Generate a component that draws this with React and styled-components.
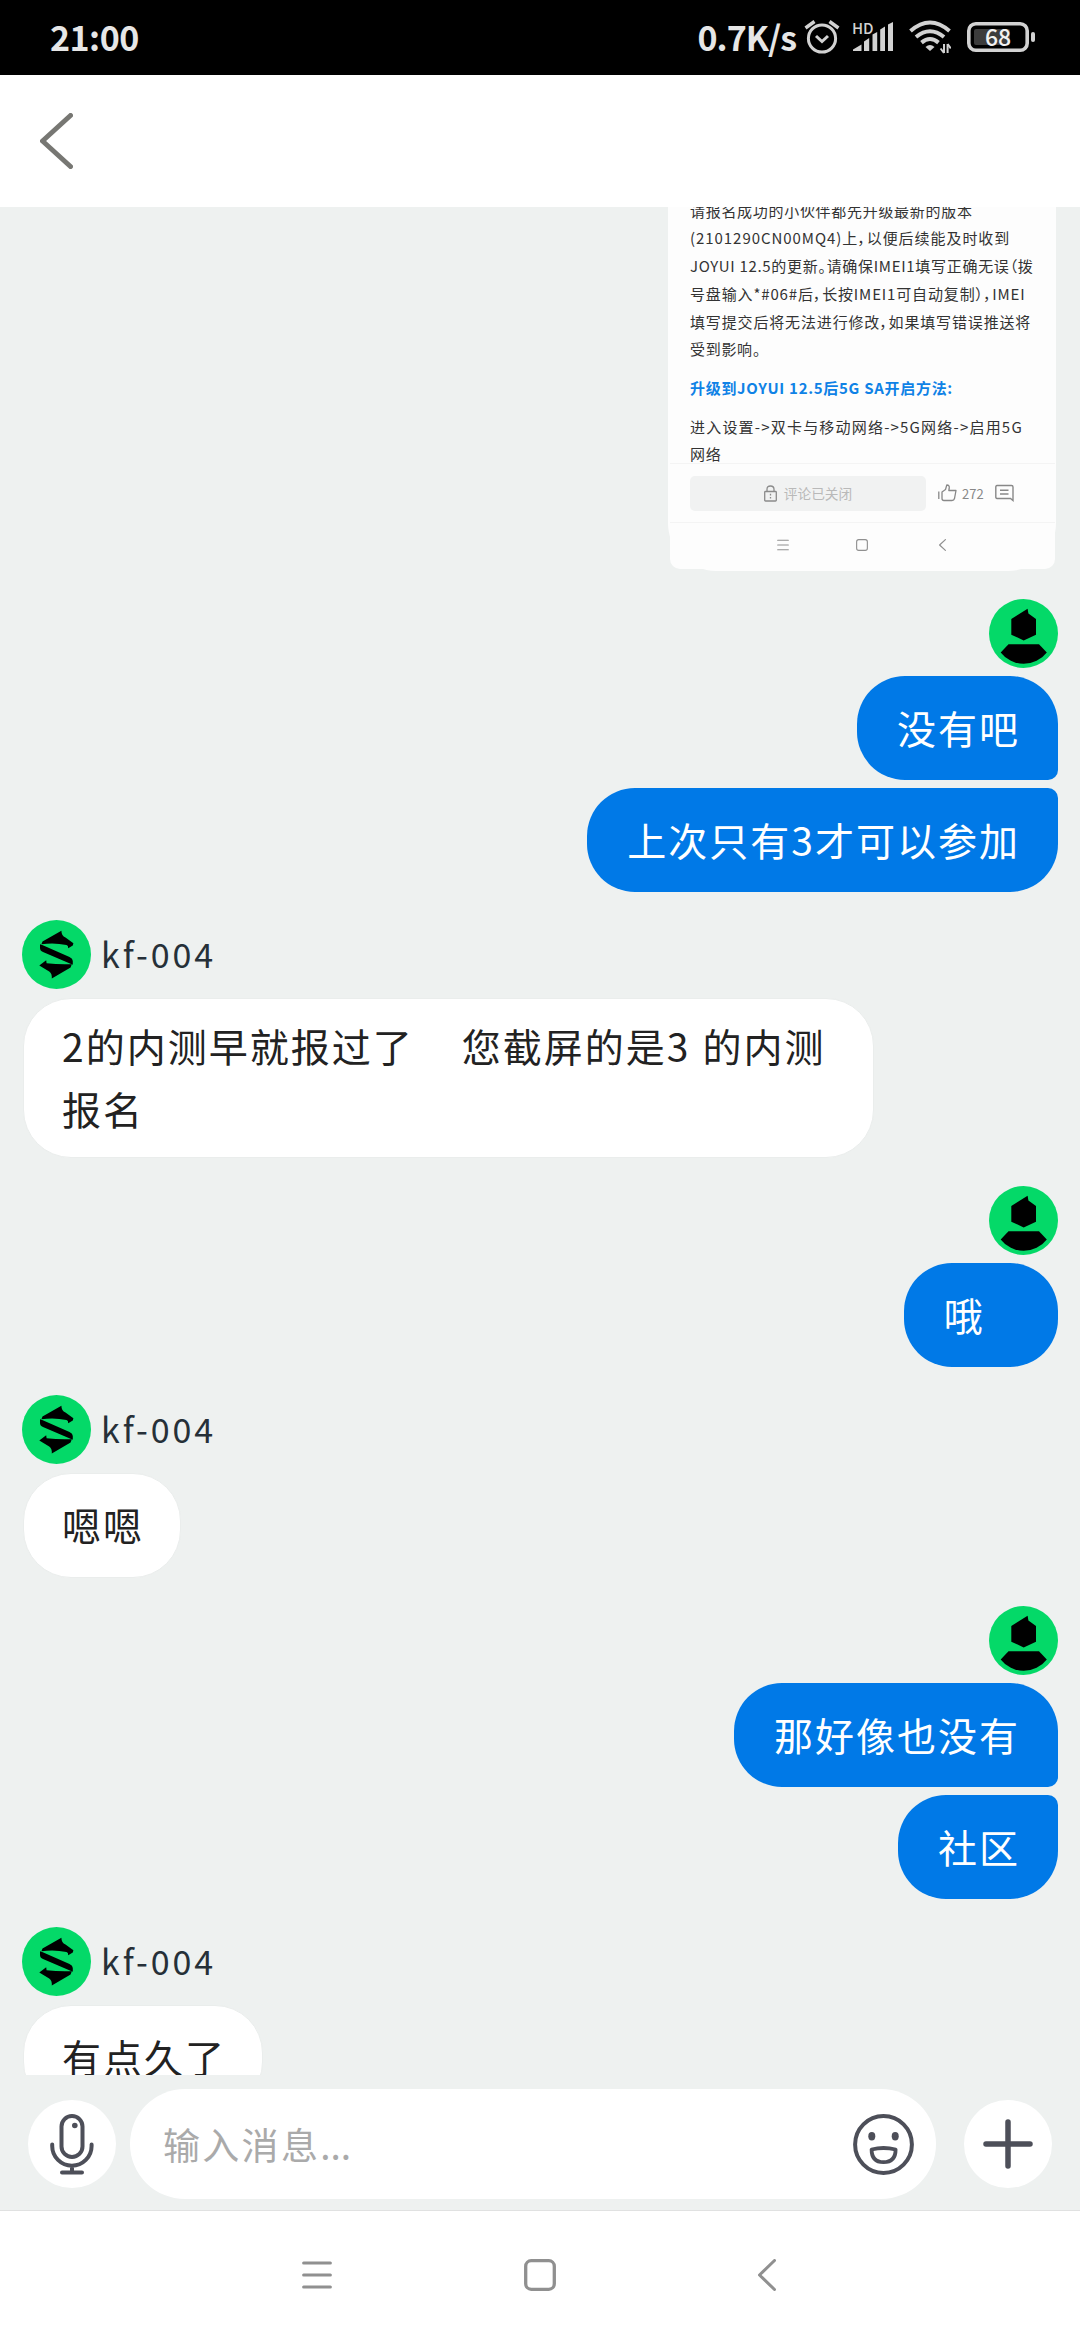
import React from 'react'
import styled, { createGlobalStyle } from 'styled-components'

const GlobalStyle = createGlobalStyle`
  * {
    box-sizing: border-box;
  }
  body {
    margin: 0;
    background: #fff;
    font-family: "Noto Sans CJK SC", "Noto Sans", sans-serif;
  }
  svg {
    display: block;
    flex-shrink: 0;
  }
`;

const Screen = styled.div`
    width: 1080px;
    height: 2340px;
    display: flex;
    flex-direction: column;
    overflow: hidden;
    background: #fff;
`;

/* status bar */
const StatusBar = styled.div`
    height: 75px;
    flex-shrink: 0;
    padding: 0 45px 1px 50px;
    display: flex;
    align-items: center;
    background: #000;
    color: #e6e6e6;
`;
const Clock = styled.span`
    flex: 1;
    padding-bottom: 1px;
    font-size: 34px;
    line-height: 40px;
    font-weight: 700;
    letter-spacing: -0.5px;
`;
const Speed = styled.span`
    padding-bottom: 1px;
    font-size: 34px;
    line-height: 40px;
    font-weight: 700;
    letter-spacing: -1px;
    margin-right: 8px;
`;
const StatusIcons = styled.div`
    display: flex;
    align-items: center;
`;
const Signal = styled.div`
    position: relative;
    margin: 0 16px 0 13px;
`;
const Hd = styled.span`
    position: absolute;
    left: -1px;
    top: -2px;
    font-size: 15px;
    line-height: 15px;
    font-weight: 500;
    color: #d2d2d2;
`;
const Battery = styled.div`
    position: relative;
    margin-left: 16px;
`;
const Percent = styled.span`
    position: absolute;
    left: 0;
    top: -1px;
    width: 62px;
    text-align: center;
    font-size: 23px;
    line-height: 30px;
    font-weight: 500;
    color: #f2f2f2;
`;

/* page header */
const Header = styled.div`
    height: 132px;
    flex-shrink: 0;
    padding: 0 0 1px 40px;
    display: flex;
    align-items: center;
    background: #fff;
`;

/* conversation */
const Chat = styled.div`
    height: 1868px;
    flex-shrink: 0;
    padding: 0 22px;
    display: flex;
    flex-direction: column;
    overflow: hidden;
    background: #eef1f0;
`;
const Group = styled.div`
    flex-shrink: 0;
    display: flex;
    flex-direction: column;
    align-items: ${props => props.mine ? "flex-end" : "flex-start"};
    gap: ${props => props.mine ? 8 : 9}px;
    margin-bottom: 28px;
`;
const Sender = styled.div`
    height: 69px;
    display: flex;
    align-items: center;
`;
const Name = styled.span`
    margin-left: 10px;
    padding-bottom: 2px;
    font-size: 34px;
    line-height: 40px;
    letter-spacing: 2.9px;
    color: #263038;
`;
const Bubble = styled.div`
    min-height: 104px;
    display: flex;
    align-items: center;
    border-radius: 48px;
    font-size: 39px;
    letter-spacing: 2px;
    word-spacing: 1px;
    white-space: pre-wrap;
`;
const MyBubble = styled(Bubble)`
    padding: 0 38px 1px 40px;
    background: #0079e7;
    color: #fff;
    line-height: 63px;
    border-top-right-radius: ${props => props.joined === "top" ? 10 : 48}px;
    border-bottom-right-radius: ${props => props.joined === "bottom" ? 10 : 48}px;
`;
const TheirBubble = styled(Bubble)`
    max-width: 851px;
    min-height: 105px;
    margin-left: 1px;
    padding: 15px 36px 17px 38px;
    background: #fff;
    border: 1px solid #eaedec;
    color: #222;
    line-height: 63px;
    word-spacing: 1.3px;
`;

/* shared screenshot */
const Shot = styled.div`
    flex-shrink: 0;
    align-self: flex-end;
    width: 388px;
    height: 364px;
    margin: 0 2px 28px 0;
    padding: 0 1px 2px 2px;
    background: #fdfdfd;
    border-radius: 0 0 48px 48px;
`;
const ShotPage = styled.div`
    height: 362px;
    display: flex;
    flex-direction: column;
    overflow: hidden;
    background: #fdfdfd;
    border-radius: 0 0 10px 10px;
`;
const Article = styled.div`
    height: 256px;
    padding-left: 20px;
    overflow: hidden;
    font-size: 15px;
    line-height: 27.8px;
    color: #333;
`;
const Paragraph = styled.div`
    margin: ${props => props.first ? "-10.5px" : "11px"} 0 0;
`;
const Line = styled.div`
    white-space: pre;
    font-feature-settings: "palt";
    letter-spacing: ${props => props.$track || 0.7}px;
`;
const Subtitle = styled(Line)`
    margin-top: 10.5px;
    font-weight: 700;
    color: #0f82e6;
`;
const ShotBar = styled.div`
    height: 60px;
    padding: 0 41px 0 20px;
    display: flex;
    align-items: center;
    border-top: 1px solid #f4f4f4;
    border-bottom: 1px solid #f4f4f4;
    font-size: 15px;
    color: #888;
`;
const Closed = styled.div`
    width: 236px;
    height: 35px;
    margin-right: 12px;
    display: flex;
    align-items: center;
    justify-content: center;
    gap: 7px;
    border-radius: 5px;
    background: #f1f2f2;
    font-size: 13.7px;
    color: #b9b9b9;
`;
const Likes = styled.span`
    width: 23px;
    margin: 0 10px 0 5px;
    font-size: 13px;
`;
const ShotNav = styled.div`
    flex: 1;
    padding: 0 0 3px 107px;
    display: grid;
    grid-template-columns: 79px 83px 20px;
    align-items: center;
`;

/* composer */
const Composer = styled.div`
    height: 136px;
    flex-shrink: 0;
    padding: 3px 28px 0 28px;
    display: flex;
    align-items: center;
    background: #eef1f0;
    border-bottom: 1px solid #e0e1e1;
`;
const RoundButton = styled.button`
    width: 88px;
    height: 88px;
    padding: 0;
    border: none;
    border-radius: 50%;
    display: flex;
    align-items: center;
    justify-content: center;
    background: #fff;
`;
const Field = styled.div`
    width: 806px;
    height: 110px;
    margin: 0 28px 0 14px;
    padding: 0 22px 0 33px;
    display: flex;
    align-items: center;
    justify-content: space-between;
    border-radius: 55px;
    background: #fff;
`;
const Placeholder = styled.span`
    font-size: 37px;
    letter-spacing: 2.3px;
    color: #aaa;
`;
const Dots = styled.span`
    letter-spacing: 0;
`;

const NavBar = styled.div`
    flex: 1;
    padding: 0 0 1px 302px;
    display: grid;
    grid-template-columns: 222px 234px 20px;
    align-items: center;
`;

const UserAvatar = () => (
  <svg width="69" height="69" viewBox="0 0 69 69">
    <circle cx="34.5" cy="34.5" r="34.5" fill="#04d968" />
    <path d="M38.6 9.8 L39.4 14.6 L47 20 V35.7 L34.7 41.4 L22.3 35.7 V20 Z" />
    <path d="M19.5 45.3 H50 L57.8 53.4 A29 29 0 0 1 11.7 53.4 Z" />
  </svg>
);

const AgentAvatar = () => (
  <svg width="69" height="69" viewBox="0 0 69 69">
    <circle cx="34.5" cy="34.5" r="34.5" fill="#04d968" />
    <path d="M39.4 10.7 Q39.4 15.6 43.5 17.6 L51.4 23.3 L50.8 25.6 L46.2 28.2 Q46.4 25.6 44.5 25 Q32 22.4 19.4 24.3 L20.5 21.6 Z" />
    <path d="M18 24.2 L20.8 25.2 L47.5 37 Q50.8 38.6 50.8 41 V44.8 L21 32 Q18 30.8 18 28 Z" />
    <path d="M17.3 45.4 L24.2 40.3 L24.6 43.2 Q37 44.8 49.8 44.2 L48.6 47.6 L29.8 58.6 Q30.2 53.6 27.2 51.6 Z" />
  </svg>
);

const AlarmIcon = () => (
  <svg width="36" height="36" viewBox="0 0 36 36" fill="none" stroke="#d2d2d2">
    <circle cx="18" cy="19.5" r="13.6" strokeWidth="3" />
    <path d="M12 17 L18 22.5 L24 17" strokeWidth="3" />
    <path d="M1.5 9 L10.5 2.5 M34.5 9 L25.5 2.5" strokeWidth="3.4" />
  </svg>
);

const SignalIcon = () => (
  <svg width="40" height="30" viewBox="0 0 40 30" fill="#d2d2d2">
    <path d="M0 29 V27.5 L8.5 22.5 V29 Z" />
    <path d="M11 29 V19.5 L16.2 16 V29 Z" />
    <path d="M19.5 29 V12.5 L24.2 10 V29 Z" />
    <path d="M27.2 29 V7.5 L32 4.5 V29 Z" />
    <path d="M35 29 V2.5 L40 0 V29 Z" />
  </svg>
);

const WifiIcon = () => (
  <svg width="42" height="34" viewBox="0 0 42 34" fill="none" stroke="#d2d2d2" strokeWidth="4">
    <path d="M1.5 11 Q21 -6 40.5 11" />
    <path d="M7 17 Q21 5.5 35 17" />
    <path d="M12.5 22.6 Q21 15.5 29.5 22.6" />
    <path d="M16.5 27 Q21 23 25.5 27 L21 31 Z" fill="#d2d2d2" stroke="none" />
    <path d="M35 24 V33 M38.6 24 V33" strokeWidth="2" />
    <path d="M35 33 L31.6 28.5 M38.6 24 L41.8 28.5" strokeWidth="2" />
  </svg>
);

const BatteryIcon = () => (
  <svg width="68" height="30" viewBox="0 0 68 30">
    <rect x="1.8" y="1.8" width="58.4" height="26.4" rx="7" fill="none" stroke="#d2d2d2" strokeWidth="3.6" />
    <rect x="7" y="7" width="36" height="16" rx="2" fill="#3c3c3c" />
    <rect x="64" y="10" width="4" height="10" rx="2" fill="#d2d2d2" />
  </svg>
);

const BackIcon = ({ width, height, stroke, weight }) => (
  <svg width={width} height={height} viewBox={`0 0 ${width} ${height}`} fill="none">
    <path
      d={`M${width - weight / 2} ${weight / 2} L${weight / 2} ${height / 2} L${width - weight / 2} ${height - weight / 2}`}
      stroke={stroke}
      strokeWidth={weight}
      strokeLinecap="round"
      strokeLinejoin="round"
    />
  </svg>
);

const MenuIcon = ({ size, weight }) => (
  <svg width={size} height={size} viewBox="0 0 30 30" stroke="#909090" strokeWidth={weight} strokeLinecap="round">
    <path d="M1.6 3 H28.4 M1.6 15 H28.4 M1.6 27 H28.4" />
  </svg>
);

const HomeIcon = ({ size, weight }) => (
  <svg width={size} height={size} viewBox="0 0 32 32">
    <rect x="1.7" y="1.7" width="28.6" height="28.6" rx="5.5" fill="none" stroke="#909090" strokeWidth={weight} />
  </svg>
);

const LockIcon = () => (
  <svg width="13" height="17" viewBox="0 0 13 17" fill="none" stroke="#8b8b8b" strokeWidth="1.3">
    <rect x="0.7" y="6.5" width="11.6" height="9.5" rx="0.8" />
    <path d="M3 6.5 V4.2 Q3 1 6.5 1 Q10 1 10 4.2 V6.5 M6.5 8.8 V10.5 M6.5 12 V13.6" />
  </svg>
);

const ThumbIcon = () => (
  <svg width="19" height="18" viewBox="0 0 19 18" fill="none" stroke="#888" strokeWidth="1.3" strokeLinejoin="round">
    <path d="M0.8 7.5 V15 M4 8 L7.5 5.5 L8.8 1 Q11.8 1 11.2 4.5 L10.8 6.5 H18 L16.5 14.5 Q16 16.5 14 16.5 H6 Q4 16.5 4 14.5 Z" />
  </svg>
);

const CommentIcon = () => (
  <svg width="19" height="18" viewBox="0 0 19 18" fill="none" stroke="#888" strokeWidth="1.4">
    <path d="M2 1.5 H16.5 Q18 1.5 18 3 V16.5 L15.5 14.5 H2 Q0.8 14.5 0.8 13 V3 Q0.8 1.5 2 1.5 Z M5 6.3 H13.5 M5 10 H13.5" />
  </svg>
);

const MicIcon = () => (
  <svg width="44" height="61" viewBox="0 0 44 61" fill="none" stroke="#4d4f59" strokeWidth="4" strokeLinecap="round">
    <rect x="11.5" y="2" width="21" height="41" rx="10.5" />
    <path d="M2.2 30.5 V32 A19.7 19.7 0 0 0 41.6 32 V30.5 M22 52 V58 M12 58.5 H32" />
    <circle cx="24.8" cy="11.5" r="2.8" fill="#4d4f59" stroke="none" />
  </svg>
);

const SmileIcon = () => (
  <svg width="61" height="61" viewBox="0 0 61 61" fill="none" stroke="#4d4f59" strokeWidth="4">
    <circle cx="30.5" cy="30.5" r="28.4" />
    <path d="M18.6 35.5 Q30.5 32.5 42.6 35.5 Q42.6 48.2 30.5 48.2 Q18.6 48.2 18.6 35.5 Z" strokeWidth="3.8" strokeLinejoin="round" />
    <ellipse cx="18.8" cy="22.3" rx="3.5" ry="4.2" fill="#4d4f59" stroke="none" />
    <ellipse cx="42.2" cy="22.3" rx="3.5" ry="4.2" fill="#4d4f59" stroke="none" />
  </svg>
);

const PlusIcon = () => (
  <svg width="50" height="50" viewBox="0 0 50 50" stroke="#4d4f59" strokeWidth="5.5" strokeLinecap="round">
    <path d="M3 25 H47 M25 3 V47" />
  </svg>
);

const MySender = () => (
  <Sender>
    <UserAvatar />
  </Sender>
);

const Agent = ({ children }) => (
  <Group>
    <Sender>
      <AgentAvatar />
      <Name>kf-004</Name>
    </Sender>
    <TheirBubble>{children}</TheirBubble>
  </Group>
);

const SharedShot = () => (
  <Shot>
    <ShotPage>
      <Article>
        <Paragraph first>
          <Line>请报名成功的小伙伴都先升级最新的版本</Line>
          <Line $track={0.95}>(2101290CN00MQ4)上，以便后续能及时收到</Line>
          <Line>JOYUI 12.5的更新。请确保IMEI1填写正确无误（拨</Line>
          <Line $track={0.85}>号盘输入*#06#后，长按IMEI1可自动复制），IMEI</Line>
          <Line $track={0.85}>填写提交后将无法进行修改，如果填写错误推送将</Line>
          <Line>受到影响。</Line>
        </Paragraph>
        <Subtitle>升级到JOYUI 12.5后5G SA开启方法:</Subtitle>
        <Paragraph>
          <Line $track={1.2}>进入设置-&gt;双卡与移动网络-&gt;5G网络-&gt;启用5G</Line>
          <Line>网络</Line>
        </Paragraph>
      </Article>
      <ShotBar>
        <Closed>
          <LockIcon />
          评论已关闭
        </Closed>
        <ThumbIcon />
        <Likes>272</Likes>
        <CommentIcon />
      </ShotBar>
      <ShotNav>
        <MenuIcon size={12} weight={2.6} />
        <HomeIcon size={12} weight={3} />
        <BackIcon width={7} height={12} stroke="#909090" weight={1.2} />
      </ShotNav>
    </ShotPage>
  </Shot>
);

const App = () => {
  return (
    <>
      <GlobalStyle />
      <Screen>
        <StatusBar>
          <Clock>21:00</Clock>
          <Speed>0.7K/s</Speed>
          <StatusIcons>
            <AlarmIcon />
            <Signal>
              <SignalIcon />
              <Hd>HD</Hd>
            </Signal>
            <WifiIcon />
            <Battery>
              <BatteryIcon />
              <Percent>68</Percent>
            </Battery>
          </StatusIcons>
        </StatusBar>
        <Header>
          <BackIcon width={33} height={56} stroke="#777773" weight={5} />
        </Header>
        <Chat>
          <SharedShot />
          <Group mine>
            <MySender />
            <MyBubble joined="bottom">没有吧</MyBubble>
            <MyBubble joined="top">上次只有3才可以参加</MyBubble>
          </Group>
          <Agent>{"2的内测早就报过了    您截屏的是3 的内测报名"}</Agent>
          <Group mine>
            <MySender />
            <MyBubble>{"哦   "}</MyBubble>
          </Group>
          <Agent>嗯嗯</Agent>
          <Group mine>
            <MySender />
            <MyBubble joined="bottom">那好像也没有</MyBubble>
            <MyBubble joined="top">社区</MyBubble>
          </Group>
          <Agent>有点久了</Agent>
        </Chat>
        <Composer>
          <RoundButton><MicIcon /></RoundButton>
          <Field>
            <Placeholder>输入消息<Dots>...</Dots></Placeholder>
            <SmileIcon />
          </Field>
          <RoundButton><PlusIcon /></RoundButton>
        </Composer>
        <NavBar>
          <MenuIcon size={30} weight={3} />
          <HomeIcon size={32} weight={3.3} />
          <BackIcon width={18} height={32} stroke="#909090" weight={3} />
        </NavBar>
      </Screen>
    </>
  );
}

export default App
